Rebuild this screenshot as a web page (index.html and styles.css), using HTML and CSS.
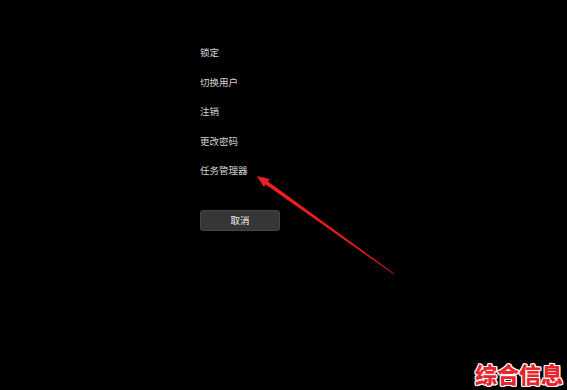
FILE: index.html
```html
<html>
    <head>
        <meta charset="UTF-8">
        <title>Ctrl+Alt+Del</title>
        <link rel="stylesheet" href="styles.css">
    </head>
    <body>
        <div class="menu">
            <div class="item">锁定</div>
            <div class="item">切换用户</div>
            <div class="item">注销</div>
            <div class="item">更改密码</div>
            <div class="item">任务管理器</div>
            <button class="btn_cancel">取消</button>
        </div>

        <!-- flecha roja sobre la pantalla -->
        <svg class="flecha" viewBox="0 0 567 390" width="567" height="390">
            <polygon fill="#f21d1d" points="257,176 263.9,187.1 265.6,184.6 393.8,274.3 394.2,273.7 268,181.4 269.7,178.9"/>
        </svg>

        <div class="marca">综合信息</div>
    </body>
</html>
```

FILE: styles.css
```css
html, body {
    margin: 0;
    padding: 0;
    background-color: #000;
    width: 567px;
    height: 390px;
    overflow: hidden;
    font-family: "Noto Sans CJK SC", "Noto Sans", sans-serif;
}
.menu {
    padding-top: 38px;
    padding-left: 200px;
    display: flex;
    flex-direction: column;
    align-items: flex-start;
}
.item {
    color: #d6d6d6;
    font-size: 9.5px;
    line-height: 29.5px;
    height: 29.5px;
}
.btn_cancel {
    margin-top: 24px;
    width: 80px;
    height: 21px;
    padding: 0;
    border: 1px solid #454545;
    border-radius: 3px;
    background-color: #363636;
    color: #f0f0f0;
    font-family: "Noto Sans CJK SC", sans-serif;
    font-size: 9.5px;
}
.flecha {
    position: absolute;
    left: 0;
    top: 0;
}
.marca {
    position: absolute;
    right: 4px;
    bottom: 5px;
    font-size: 22px;
    font-weight: 900;
    color: #e8242c;
    line-height: 24px;
    text-shadow: 1px 0 #fff, -1px 0 #fff, 0 1px #fff, 0 -1px #fff, 1px 1px #fff, -1px -1px #fff, 1px -1px #fff, -1px 1px #fff;
}
```
